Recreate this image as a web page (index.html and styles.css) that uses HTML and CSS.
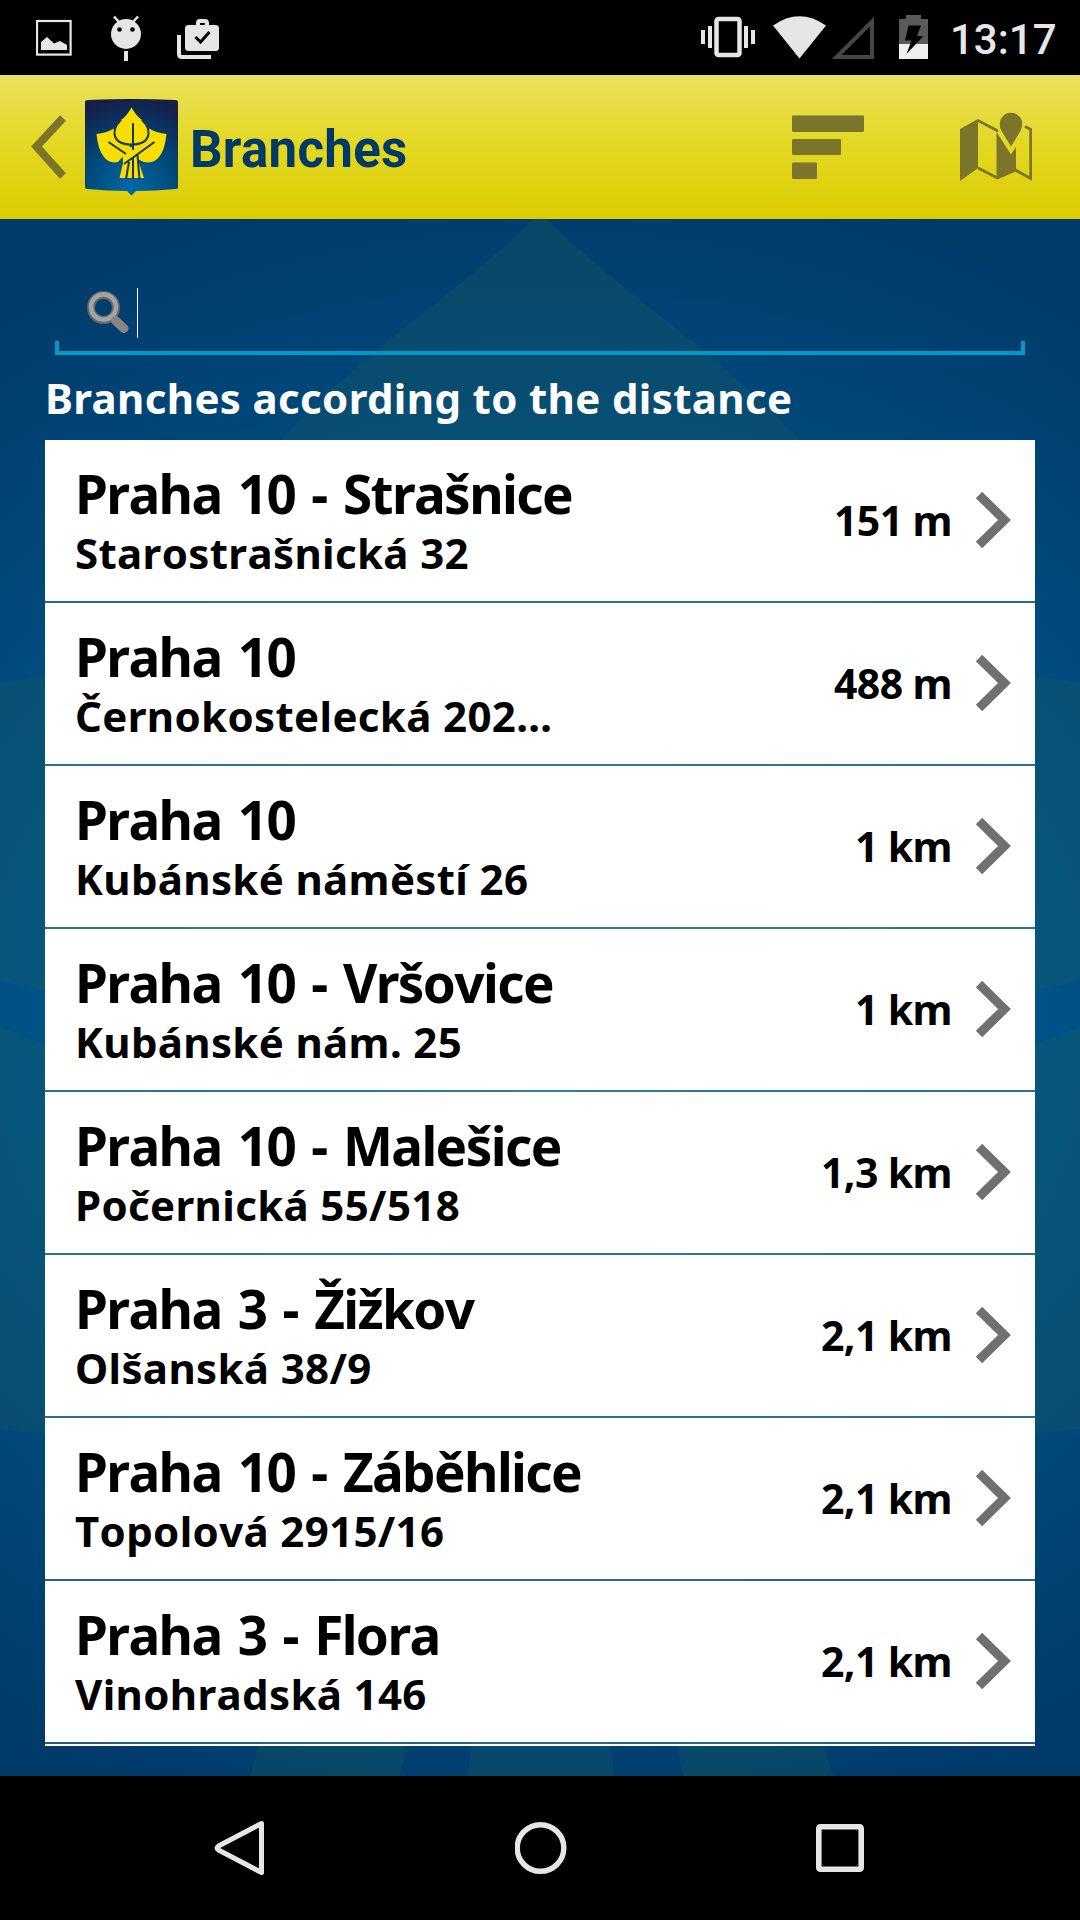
FILE: index.html
```
<!DOCTYPE html>
<html lang="en">
<head>
<meta charset="UTF-8">
<meta name="viewport" content="width=device-width, initial-scale=1.0">
<title>Branches</title>
<link rel="stylesheet" href="styles.css">
</head>
<body>
    <div class="status-bar">
        <svg class="st-image" width="36" height="75" viewBox="36 0 36 75">
            <rect x="37" y="21" width="33.6" height="33.6" fill="none" stroke="#e6e6e6" stroke-width="2.2"/>
            <path d="M41 50V42L47 37L54 43.500L60 41L67 45V50Z" fill="#e6e6e6"/>
        </svg>
        <svg class="st-android" width="30" height="75" viewBox="111 0 30 75">
            <path d="M114 16.500L119 22M138 16.500L133 22" stroke="#e6e6e6" stroke-width="2.500"/>
            <circle cx="126" cy="34" r="15" fill="#e6e6e6"/>
            <circle cx="119.500" cy="29.500" r="2.300"/>
            <circle cx="132.500" cy="29.500" r="2.300"/>
            <rect x="124" y="51" width="4" height="10" fill="#e6e6e6"/>
        </svg>
        <svg class="st-work" width="43" height="75" viewBox="177 0 43 75">
            <path d="M179 35V54Q179 57 182 57H211" fill="none" stroke="#e6e6e6" stroke-width="4"/>
            <rect x="185" y="25" width="34" height="26" rx="3.500" fill="#e6e6e6"/>
            <path d="M198 26V23Q198 21 200 21H205Q207 21 207 23V26" fill="none" stroke="#e6e6e6" stroke-width="4"/>
            <path d="M195.500 37L200.500 42L209.500 32" fill="none" stroke="#000" stroke-width="3"/>
        </svg>
        <div class="status-right">
            <svg class="st-vibrate" width="54" height="75" viewBox="701 0 54 75">
                <rect x="716.500" y="19" width="23" height="36" rx="2" fill="none" stroke="#e6e6e6" stroke-width="4.500"/>
                <path d="M701 30h4v14h-4zM708 26h4v22h-4zM744 26h4v22h-4zM751 30h4v14h-4z" fill="#e6e6e6"/>
            </svg>
            <svg class="st-wifi" width="54" height="75" viewBox="773 0 54 75">
                <path d="M773 25.500Q799.500 7 826 25.500L799.500 58.500Z" fill="#e6e6e6"/>
            </svg>
            <svg class="st-signal" width="43" height="75" viewBox="832 0 43 75">
                <path d="M836.500 57H872V21.500Z" fill="none" stroke="#464646" stroke-width="4"/>
            </svg>
            <svg class="st-battery" width="29" height="75" viewBox="899 0 29 75">
                <path d="M899 44V19H906V15H921V19H928V44Z" fill="#5a5a5a"/>
                <path d="M899 44H928V59H899Z" fill="#f0f0f0"/>
                <path d="M908.500 25.500H921L917 36H923.500L906.500 54L911.500 40.500H905Z" fill="#000"/>
            </svg>
            <span class="clock">13:17</span>
        </div>
    </div>

    <div class="app-bar">
        <svg class="back" width="36" height="66" viewBox="29 114 36 66">
            <path d="M62 118L35.500 146.500L62 176" fill="none" stroke="#7b742b" stroke-width="8"/>
        </svg>
        <svg class="logo" width="94" height="97" viewBox="85 99 94 97">
            <defs>
                <radialGradient id="logoBg" cx="0.5" cy="0.95" r="0.95">
                    <stop offset="0" stop-color="#0068a6"/>
                    <stop offset="0.5" stop-color="#004a7c"/>
                    <stop offset="1" stop-color="#14204a"/>
                </radialGradient>
            </defs>
            <path d="M85 102Q85 100 88 100Q131 98 175 100Q178 100 178 102V187Q178 189 175 189Q156 191 136 191L131.500 195.500L127 191Q107 191 88 189Q85 189 85 187Z" fill="url(#logoBg)"/>
            <g fill="#f9de00">
                <path d="M96.500 134Q106 133 114 128.500L131 144L124 155L118 162Q109 164 104 157Q98 150 96.500 134Z"/>
                <path d="M166.500 134Q157 133 149 128.500L132 144L133 157L144 162Q154 164 159 157Q165 150 166.500 134Z"/>
                <path d="M122 147H140L137 157L144 178H119.500L123 163Z"/>
            </g>
            <path d="M131.500 109Q136 116 143 121Q149 127 148.500 134Q147 144.500 131.500 144.500Q116 144.500 114.500 134Q114 127 120 121Q127 116 131.500 109Z" fill="#f9de00" stroke="#16385a" stroke-width="2"/>
            <path d="M131.500 107.500Q136 116 142 120L131 126L121 120Q127 116 131.500 107.500Z" fill="#f9de00"/>
            <path d="M133 123V150M108.500 142L126 154M154.500 142L124 164M129 162L126 179M133 158V179M137.500 155L139.500 179" fill="none" stroke="#16385a" stroke-width="2"/>
        </svg>
        <h1>Branches</h1>
        <svg class="sort" width="72" height="66" viewBox="0 0 72 66">
            <g fill="#7b742b">
                <rect x="0" y="1.500" width="72" height="16.500" rx="1"/>
                <rect x="0" y="25" width="49" height="16" rx="1"/>
                <rect x="0" y="48.500" width="25" height="16.500" rx="1"/>
            </g>
        </svg>
        <svg class="map" width="72" height="70" viewBox="960 111 72 70">
            <path d="M960 128L978 118V167L960 180Z" fill="#7b742b"/>
            <path d="M996.500 131L1011 153.500L1016 146V170L996.500 178Z" fill="#7b742b"/>
            <path d="M978 119.500L998 130M978 167L997.500 177L1015.500 169L1030.700 177.500V128.500L1025 125.500" fill="none" stroke="#7b742b" stroke-width="2.800"/>
            <path d="M1011 145.500L1001.500 130Q999.500 126 999.800 123A11.200 11.200 0 0 1 1022.200 123Q1022.200 126 1020.500 130Z" fill="#7b742b"/>
        </svg>
    </div>

    <div class="content">
        <svg class="leaf-bg" viewBox="0 219 1080 1557" preserveAspectRatio="none">
            <g fill="#2a6a50" fill-opacity="0.2">
                <path d="M540 212C470 285 350 360 282 440C210 525 190 620 190 700C190 950 320 1120 540 1120C760 1120 890 950 890 700C890 620 870 525 798 440C730 360 610 285 540 212Z"/>
                <path d="M0 683Q90 668 188 672C190 850 240 1000 340 1090Q150 1010 0 981Z"/>
                <path d="M1080 683Q990 668 892 672C890 850 840 1000 740 1090Q930 1010 1080 981Z"/>
                <path d="M0 1027Q200 1100 450 1260Q380 1440 180 1440Q90 1441 0 1429Z"/>
                <path d="M1080 1027Q880 1100 630 1260Q700 1440 900 1440Q990 1441 1080 1429Z"/>
                <path d="M270 1700L250 1776H400L415 1700ZM475 1700L468 1776H614L606 1700ZM668 1700L683 1776H833L812 1700Z"/>
            </g>
        </svg>
        <div class="search">
            <svg class="search-icon" width="46" height="46" viewBox="84 290 46 46">
                <circle cx="103.500" cy="307.500" r="12.500" fill="none" stroke="#686868" stroke-width="8"/>
                <circle cx="103.500" cy="307" r="12.500" fill="none" stroke="#a3a3a3" stroke-width="4.500"/>
                <path d="M115.500 320.500L124 328.500" stroke="#8b8581" stroke-width="9" stroke-linecap="round"/>
            </svg>
            <span class="cursor"></span>
        </div>
        <h2>Branches according to the distance</h2>
        <ul class="branch-list" id="branchList"></ul>
    </div>

    <div class="nav-bar">
        <svg width="52" height="60" viewBox="213 1818 52 60">
            <path d="M261.500 1823.500V1872.500L218.500 1850Q215.500 1848 218.500 1846Z" fill="none" stroke="#e6e6e6" stroke-width="5" stroke-linejoin="round"/>
        </svg>
        <svg width="52" height="52" viewBox="0.5 0 52 52">
            <circle cx="26" cy="26" r="23.300" fill="none" stroke="#e6e6e6" stroke-width="5.400"/>
        </svg>
        <svg width="48" height="48" viewBox="0 0 48 48">
            <rect x="2.800" y="2.800" width="42.400" height="42.400" rx="1.500" fill="none" stroke="#e6e6e6" stroke-width="5.600"/>
        </svg>
    </div>

    <script>
        var branches = [
            ['Praha 10 - Strašnice', 'Starostrašnická 32', '151 m'],
            ['Praha 10', 'Černokostelecká 202…', '488 m'],
            ['Praha 10', 'Kubánské náměstí 26', '1 km'],
            ['Praha 10 - Vršovice', 'Kubánské nám. 25', '1 km'],
            ['Praha 10 - Malešice', 'Počernická 55/518', '1,3 km'],
            ['Praha 3 - Žižkov', 'Olšanská 38/9', '2,1 km'],
            ['Praha 10 - Záběhlice', 'Topolová 2915/16', '2,1 km'],
            ['Praha 3 - Flora', 'Vinohradská 146', '2,1 km']
        ];

        var html = '';
        for (var i = 0; i < branches.length; i++) {
            html += '<li class="branch"><div class="branch-info">' +
                '<div class="branch-name">' + branches[i][0] + '</div>' +
                '<div class="branch-street">' + branches[i][1] + '</div></div>' +
                '<div class="branch-distance">' + branches[i][2] + '</div>' +
                '<svg class="chevron" width="36" height="58" viewBox="0 0 36 58">' +
                '<path d="M4 3L29.500 28L4 53" fill="none" stroke="#6f7070" stroke-width="9"/></svg></li>';
        }
        document.getElementById('branchList').innerHTML = html;
    </script>
</body>
</html>
```
FILE: styles.css
```
* {
    box-sizing: border-box;
}

body {
    margin: 0;
    width: 1080px;
    height: 1920px;
    display: flex;
    flex-direction: column;
    overflow: hidden;
    background-color: #000;
    font-family: "Noto Sans", "Open Sans", sans-serif;
}

svg {
    display: block;
    flex-shrink: 0;
}

.status-bar {
    height: 75px;
    display: flex;
    padding-left: 36px;
}

.st-android {
    margin-left: 39px;
}

.st-work {
    margin-left: 36px;
}

.status-right {
    margin-left: auto;
    display: flex;
    padding-right: 24px;
}

.st-wifi {
    margin-left: 18px;
}

.st-signal {
    margin-left: 5px;
}

.st-battery {
    margin-left: 24px;
}

.clock {
    width: 106px;
    margin-left: 22px;
    color: #e6e6e6;
    font-family: Roboto, sans-serif;
    font-size: 42px;
    font-weight: 500;
    line-height: 79px;
    text-align: right;
    white-space: nowrap;
}

.app-bar {
    height: 144px;
    display: flex;
    align-items: center;
    padding: 0 48px 0 30px;
    background: linear-gradient(#ece05e, #e4d826 45%, #dccc00);
}

.logo {
    margin-left: 19px;
}

h1 {
    flex: 1;
    margin: 6px 0 0 11px;
    color: #003866;
    font-family: Roboto, sans-serif;
    font-size: 51px;
    font-weight: 700;
    line-height: 60px;
    letter-spacing: 0.3px;
}

.map {
    margin-left: 96px;
}

.content {
    position: relative;
    height: 1557px;
    padding: 48px 45px 30px;
    background: radial-gradient(ellipse 1000px 860px at 540px 790px, #00689c 0%, #005085 54%, #003a69 100%);
}

/* faded leaf emblem behind the list */
.leaf-bg {
    position: absolute;
    left: 0;
    top: 0;
    width: 100%;
    height: 100%;
}

.search {
    position: relative;
    height: 88px;
    margin: 0 10px;
    display: flex;
    align-items: flex-start;
    padding: 23px 0 0 29px;
    border-bottom: 4px solid #0099cc;
}

/* short ticks at both ends of the underline */
.search::before,
.search::after {
    content: "";
    position: absolute;
    bottom: 0;
    width: 4px;
    height: 10px;
    background-color: #0099cc;
}

.search::before {
    left: 0;
}

.search::after {
    right: 0;
}

.cursor {
    width: 1px;
    height: 50px;
    margin: -2px 0 0 7px;
    background-color: #fff;
}

h2 {
    position: relative;
    height: 85px;
    margin: 0;
    color: #fff;
    font-size: 42px;
    font-weight: 700;
    line-height: 86px;
    letter-spacing: 0.35px;
    white-space: nowrap;
}

.branch-list {
    position: relative;
    height: 1306px;
    margin: 0;
    padding: 0;
    list-style: none;
    display: flex;
    flex-direction: column;
    gap: 2px;
    background-color: rgba(255, 255, 255, 0.16);
    border-bottom: 2px solid #fff;
}

.branch {
    height: 161px;
    display: flex;
    align-items: center;
    padding: 0 24px 0 30px;
    background-color: #fff;
    color: #000;
    font-weight: 700;
    font-kerning: none;
    white-space: nowrap;
}

.branch-info {
    flex: 1;
    padding-top: 3px;
}

.branch-name {
    font-size: 53px;
    line-height: 60px;
    letter-spacing: -1.6px;
    word-spacing: 4px;
}

.branch-street {
    font-size: 42px;
    line-height: 57px;
    letter-spacing: 0.35px;
}

.branch-distance {
    padding-bottom: 2px;
    font-size: 41px;
    line-height: 56px;
    letter-spacing: -0.6px;
}

.chevron {
    margin-left: 23px;
}

.nav-bar {
    height: 144px;
    display: flex;
    align-items: center;
    justify-content: space-between;
    padding: 0 216px 0 213px;
}
```
